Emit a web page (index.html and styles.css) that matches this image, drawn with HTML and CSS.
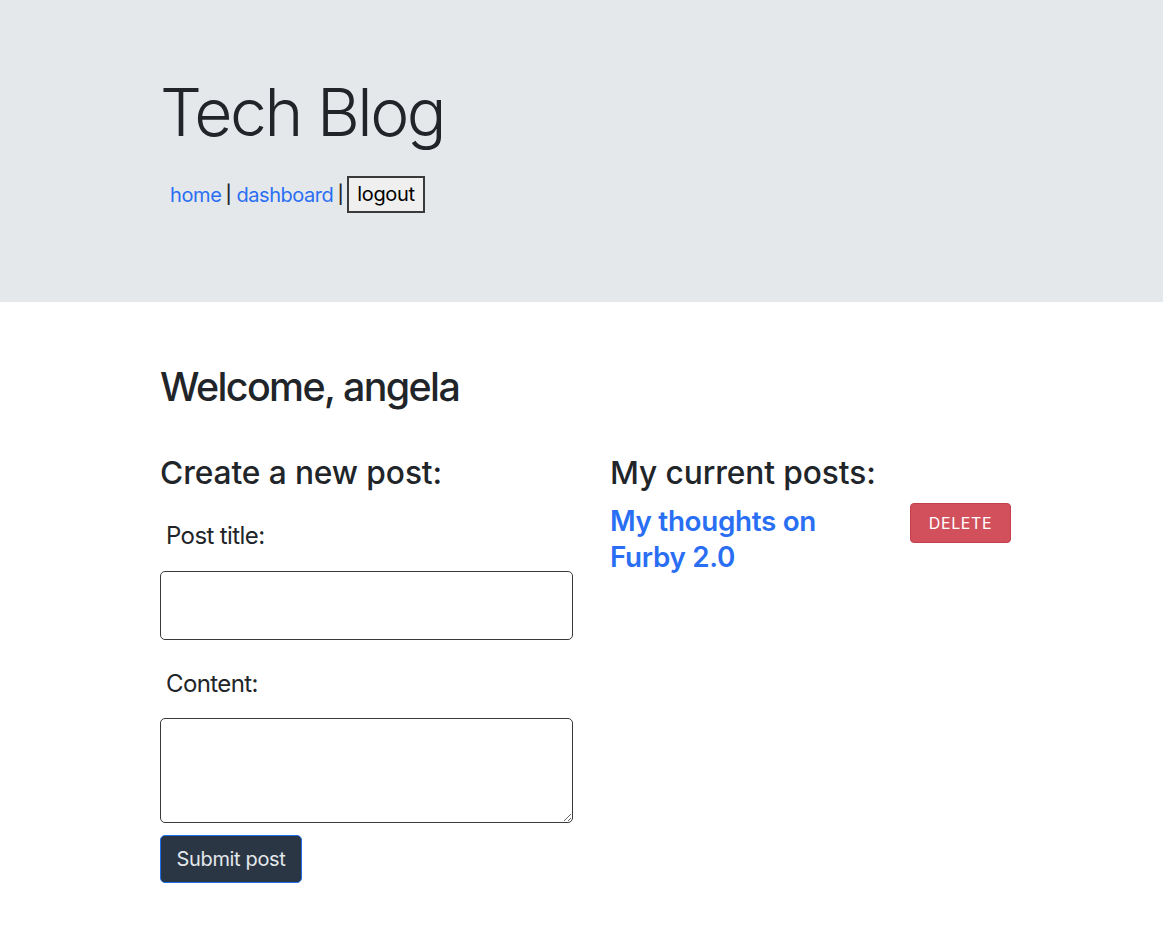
FILE: index.html
```html
<!DOCTYPE html>
<html lang="en">
<head>
<meta charset="utf-8">
<title>Tech Blog</title>
<link rel="stylesheet" href="styles.css">
</head>
<body>
<header class="hero">
  <div class="container">
    <h1 class="site-title">Tech Blog</h1>
    <nav class="nav">
      <a href="#" class="nav-link">home</a>
      <span class="sep">|</span>
      <a href="#" class="nav-link">dashboard</a>
      <span class="sep">|</span>
      <button class="logout">logout</button>
    </nav>
  </div>
</header>
<main class="container main">
  <h1 class="welcome">Welcome, angela</h1>
  <div class="columns">
    <section class="col">
      <h2 class="section-title">Create a new post:</h2>
      <form class="post-form">
        <label class="field-label" for="title">Post title:</label>
        <input id="title" class="field-input" type="text">
        <label class="field-label content-label" for="content">Content:</label>
        <textarea id="content" class="field-textarea"></textarea>
        <button type="button" class="submit-btn">Submit post</button>
      </form>
    </section>
    <section class="col">
      <h2 class="section-title">My current posts:</h2>
      <div class="post-row">
        <a href="#" class="post-link">My thoughts on Furby 2.0</a>
        <button class="delete-btn">Delete</button>
      </div>
    </section>
  </div>
</main>
</body>
</html>
```
FILE: styles.css
```css
* { box-sizing: border-box; }
body {
  margin: 0;
  font-family: Inter, "Noto Sans", "Liberation Sans", sans-serif;
  color: #212529;
  background: #fff;
}
.container {
  padding-left: 160px;
  padding-right: 140px;
}
.hero {
  background: #e5e8eb;
  height: 302px;
  padding-top: 73px;
}
.site-title {
  margin: 0;
  font-size: 66px;
  font-weight: 300;
  line-height: 1.2;
  letter-spacing: -2.5px;
}
.nav {
  display: flex;
  align-items: center;
  margin-top: 24px;
  padding-left: 10px;
  font-size: 20px;
  letter-spacing: -0.35px;
}
.nav-link {
  color: #2a6ff3;
  text-decoration: none;
}
.nav-link + .sep + .nav-link { letter-spacing: -0.45px; }
.sep {
  color: #212529;
  font-size: 18px;
  font-weight: 500;
  margin: 0 5px 0 4px;
}
.logout {
  font-family: inherit;
  font-size: 20px;
  letter-spacing: -0.35px;
  line-height: 25px;
  height: 37px;
  padding: 4px 8px;
  border: 2px solid #3a3a3a;
  background: #efefef;
  color: #000;
  margin-left: -1px;
}
.main { padding-top: 62px; }
.welcome {
  margin: 0;
  font-size: 39.4px;
  font-weight: 500;
  line-height: 1.2;
  letter-spacing: -1.6px;
}
.columns {
  display: grid;
  grid-template-columns: 413px 413px;
  column-gap: 37px;
  margin-top: 43px;
}
.section-title {
  margin: 0;
  font-size: 31.7px;
  font-weight: 500;
  line-height: 1.2;
  letter-spacing: -0.1px;
}
.post-form {
  display: flex;
  flex-direction: column;
  align-items: flex-start;
}
.field-label {
  font-size: 24px;
  line-height: 1.2;
  letter-spacing: -0.6px;
  padding-left: 6px;
  margin-top: 30px;
  margin-bottom: 20px;
}
.content-label { margin-top: 30px; margin-bottom: 19px; }
.field-input, .field-textarea {
  width: 413px;
  border: 1px solid #3a3a3a;
  border-radius: 5px;
  font-family: inherit;
  font-size: 16px;
  background: #fff;
}
.field-input { height: 69px; }
.field-textarea { height: 105px; display: block; resize: vertical; }
.submit-btn {
  margin-top: 12px;
  width: 142px;
  height: 48px;
  padding: 0;
  font-family: inherit;
  font-size: 20px;
  letter-spacing: -0.35px;
  color: #e2e8ec;
  background: #2b3645;
  border: 1px solid #1f6fe8;
  border-radius: 5px;
}
.post-row {
  display: flex;
  align-items: flex-start;
  margin-top: 11px;
}
.post-link {
  flex: 0 0 275px;
  font-size: 27.8px;
  font-weight: 600;
  line-height: 36px;
  letter-spacing: -0.3px;
  color: #2a6ff3;
  text-decoration: none;
}
.delete-btn {
  margin-left: 25px;
  width: 101px;
  height: 40px;
  font-family: inherit;
  font-size: 16px;
  text-transform: uppercase;
  letter-spacing: 0.6px;
  color: #fff;
  background: #d1505c;
  border: 1px solid #c4404d;
  border-radius: 4px;
}
```
